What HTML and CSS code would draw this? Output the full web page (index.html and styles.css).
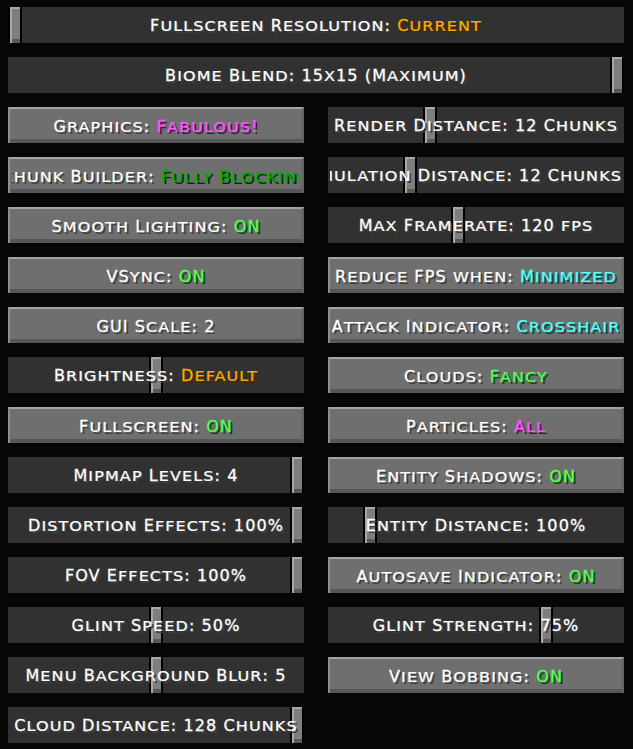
FILE: index.html
```html
<!DOCTYPE html>
<html lang="en">
<head>
<meta charset="utf-8">
<title>Video Settings</title>
<link rel="stylesheet" href="styles.css">
</head>
<body>
<div class="grid">
  <div class="slider wide"><div class="handle" style="left:0px"></div><div class="label"><span>F<small>ullscreen</small> R<small>esolution</small>: <span class="gold">C<small>urrent</small></span></span></div></div>
  <div class="slider wide"><div class="handle" style="left:602px"></div><div class="label"><span>B<small>iome</small> B<small>lend</small>: 15<small>x</small>15 (M<small>aximum</small>)</span></div></div>

  <div class="btn"><div class="label"><span>G<small>raphics</small>: <span class="purple">F<small>abulous</small>!</span></span></div></div>
  <div class="slider"><div class="handle" style="left:95px"></div><div class="label"><span>R<small>ender</small> D<small>istance</small>: 12 C<small>hunks</small></span></div></div>

  <div class="btn"><div class="label"><span>C<small>hunk</small> B<small>uilder</small>: <span class="dgreen">F<small>ully</small> B<small>locking</small></span></span></div></div>
  <div class="slider"><div class="handle" style="left:75px"></div><div class="label end"><span>S<small>imulation</small> D<small>istance</small>: 12 C<small>hunks</small></span></div></div>

  <div class="btn"><div class="label"><span>S<small>mooth</small> L<small>ighting</small>: <span class="green">ON</span></span></div></div>
  <div class="slider"><div class="handle" style="left:123px"></div><div class="label"><span>M<small>ax</small> F<small>ramerate</small>: 120 <small>fps</small></span></div></div>

  <div class="btn"><div class="label"><span>VS<small>ync</small>: <span class="green">ON</span></span></div></div>
  <div class="btn"><div class="label"><span>R<small>educe</small> FPS <small>when</small>: <span class="aqua">M<small>inimized</small></span></span></div></div>

  <div class="btn"><div class="label"><span>GUI S<small>cale</small>: 2</span></div></div>
  <div class="btn"><div class="label"><span>A<small>ttack</small> I<small>ndicator</small>: <span class="aqua">C<small>rosshair</small></span></span></div></div>

  <div class="slider"><div class="handle" style="left:141px"></div><div class="label"><span>B<small>rightness</small>: <span class="gold">D<small>efault</small></span></span></div></div>
  <div class="btn"><div class="label"><span>C<small>louds</small>: <span class="green">F<small>ancy</small></span></span></div></div>

  <div class="btn"><div class="label"><span>F<small>ullscreen</small>: <span class="green">ON</span></span></div></div>
  <div class="btn"><div class="label"><span>P<small>articles</small>: <span class="purple">A<small>ll</small></span></span></div></div>

  <div class="slider"><div class="handle" style="left:282px"></div><div class="label"><span>M<small>ipmap</small> L<small>evels</small>: 4</span></div></div>
  <div class="btn"><div class="label"><span>E<small>ntity</small> S<small>hadows</small>: <span class="green">ON</span></span></div></div>

  <div class="slider"><div class="handle" style="left:282px"></div><div class="label"><span>D<small>istortion</small> E<small>ffects</small>: 100%</span></div></div>
  <div class="slider"><div class="handle" style="left:35px"></div><div class="label"><span>E<small>ntity</small> D<small>istance</small>: 100%</span></div></div>

  <div class="slider"><div class="handle" style="left:282px"></div><div class="label"><span>FOV E<small>ffects</small>: 100%</span></div></div>
  <div class="btn"><div class="label"><span>A<small>utosave</small> I<small>ndicator</small>: <span class="green">ON</span></span></div></div>

  <div class="slider"><div class="handle" style="left:141px"></div><div class="label"><span>G<small>lint</small> S<small>peed</small>: 50%</span></div></div>
  <div class="slider"><div class="handle" style="left:211px"></div><div class="label"><span>G<small>lint</small> S<small>trength</small>: 75%</span></div></div>

  <div class="slider"><div class="handle" style="left:141px"></div><div class="label"><span>M<small>enu</small> B<small>ackground</small> B<small>lur</small>: 5</span></div></div>
  <div class="btn"><div class="label"><span>V<small>iew</small> B<small>obbing</small>: <span class="green">ON</span></span></div></div>

  <div class="slider"><div class="handle" style="left:282px"></div><div class="label"><span>C<small>loud</small> D<small>istance</small>: 128 C<small>hunks</small></span></div></div>
</div>
</body>
</html>
```

FILE: styles.css
```css
html, body {
  margin: 0;
  padding: 0;
  background: #060606;
}

body {
  font-family: "DejaVu Sans", "Noto Sans", sans-serif;
  font-weight: normal;
  font-size: 16px;
  color: #ffffff;
  letter-spacing: 1.1px;
  -webkit-text-stroke: 0.3px currentColor;
  width: 633px;
  height: 749px;
  overflow: hidden;
}

.grid {
  display: grid;
  grid-template-columns: 296px 296px;
  grid-auto-rows: 36px;
  column-gap: 24px;
  row-gap: 14px;
  padding: 7px 0 0 8px;
}

.wide {
  grid-column: span 2;
}

.btn {
  box-sizing: border-box;
  display: flex;
  background: #6f6f6f;
  border-top: 2px solid #a4a4a4;
  border-left: 2px solid #8e8e8e;
  border-right: 2px solid #636363;
  box-shadow: inset 0 -4px 0 #575757;
}

.slider {
  position: relative;
  display: flex;
  background: #313131;
}

.handle {
  position: absolute;
  top: 0;
  box-sizing: border-box;
  width: 14px;
  height: 36px;
  border-left: 2px solid #000;
  border-right: 2px solid #000;
  background: #7e7e7e;
  box-shadow: inset 2px 2px 0 #a8a8a8, inset 0 -4px 0 #595959;
}

.label {
  position: relative;
  z-index: 1;
  flex: 1;
  margin: 0 2px;
  overflow: hidden;
  display: flex;
  justify-content: center;
  align-items: center;
}

.label.end {
  justify-content: flex-end;
}

.label > span {
  flex-shrink: 0;
  white-space: nowrap;
  text-shadow: 2px 2px 0 #3f3f3f;
}

small {
  display: inline-block;
  font-size: 1em;
  line-height: 1;
  text-transform: uppercase;
  transform: scaleY(0.83);
  transform-origin: 50% 85%;
}

.gold { color: #ffaa00; text-shadow: 2px 2px 0 #3f2a00; }
.purple { color: #ff55ff; text-shadow: 2px 2px 0 #3f153f; }
.dgreen { color: #00aa00; text-shadow: 2px 2px 0 #002a00; }
.green { color: #55ff55; text-shadow: 2px 2px 0 #153f15; }
.aqua { color: #55ffff; text-shadow: 2px 2px 0 #153f3f; }
```
